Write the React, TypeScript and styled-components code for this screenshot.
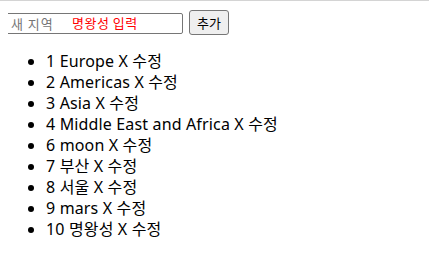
import * as React from 'react'
import styled, { createGlobalStyle } from 'styled-components'

const Global = createGlobalStyle`
    html {
        border-top: 1px solid #d4d4d4;
    }
    body {
        margin: 8px;
        background: #fff;
        font-family: "Noto Sans", "Noto Sans CJK KR", sans-serif;
        color: #000;
    }
`

const Form = styled.form`
    display: flex;
    align-items: center;
    gap: 6px;
    height: 26px;
    margin-left: -2px;
`

const Field = styled.div`
    position: relative;
    width: 177px;
    height: 21px;
`

const Input = styled.input`
    box-sizing: border-box;
    width: 100%;
    height: 100%;
    border: 1px solid #767676;
    border-radius: 2px;
    padding: 0 4px;
    font-family: "Noto Sans CJK KR", sans-serif;
    font-size: 13px;
    line-height: 19px;
    &::placeholder {
        color: #757575;
        letter-spacing: 1px;
    }
`

const Hint = styled.span`
    position: absolute;
    left: 66px;
    top: 1px;
    color: #ff0000;
    font-family: "Noto Sans CJK KR", sans-serif;
    font-size: 13px;
    line-height: 19px;
    letter-spacing: 0.5px;
    pointer-events: none;
`

const Button = styled.button`
    box-sizing: border-box;
    height: 25px;
    padding: 0 7px;
    border: 1px solid #767676;
    border-radius: 3px;
    background: #efefef;
    font-family: "Noto Sans CJK KR", sans-serif;
    font-size: 13px;
    color: #000;
`

const List = styled.ul`
    margin: 16px 0 0;
    padding-left: 38px;
    font-size: 16px;
    line-height: 21px;
    letter-spacing: 0.15px;
`

const Item = styled.li``

const regions = [
    {id: 1, name: 'Europe'},
    {id: 2, name: 'Americas'},
    {id: 3, name: 'Asia'},
    {id: 4, name: 'Middle East and Africa'},
    {id: 6, name: 'moon'},
    {id: 7, name: '부산'},
    {id: 8, name: '서울'},
    {id: 9, name: 'mars'},
    {id: 10, name: '명왕성'},
]

const App = () => {
    return (
        <div>
            <Global />
            <Form onSubmit={e => e.preventDefault()}>
                <Field>
                    <Input placeholder="새 지역" />
                    <Hint>명왕성 입력</Hint>
                </Field>
                <Button type="submit">추가</Button>
            </Form>
            <List>
                {regions.map(r => (
                    <Item key={r.id}>{r.id} {r.name} X 수정</Item>
                ))}
            </List>
        </div>
    )
}

export default App
